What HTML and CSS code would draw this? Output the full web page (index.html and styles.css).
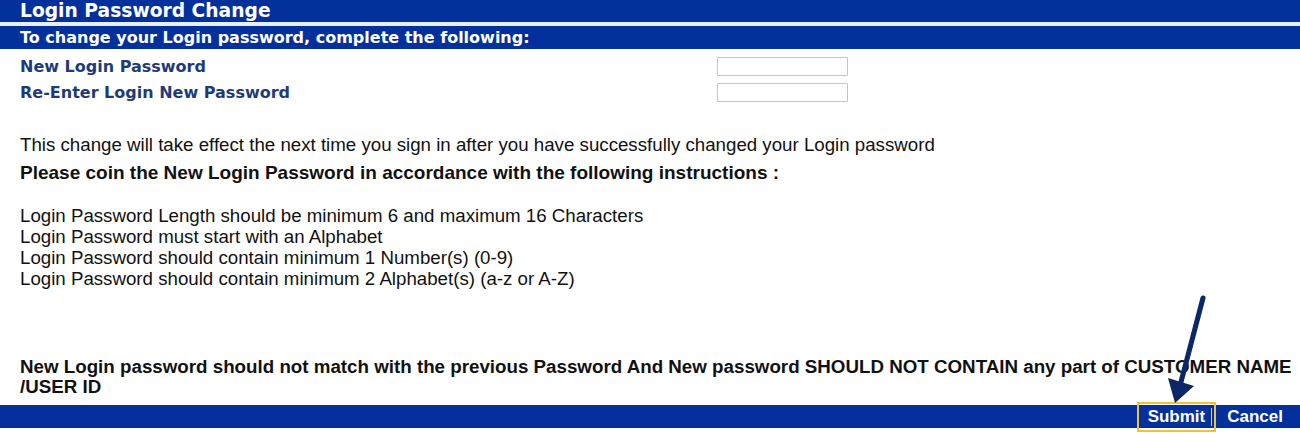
FILE: index.html
```html
<!DOCTYPE html>
<html>
  <head>
    <meta charset="utf-8">
    <title>Login Password Change</title>
    <link rel="stylesheet" href="styles.css">
  </head>
  <body>
    <div class="page">
      <div class="bar title">Login Password Change</div>
      <div class="bar subtitle">To change your Login password, complete the following:</div>

      <div class="fields">
        <label class="label" for="new_pwd">New Login Password</label>
        <input class="pwd" id="new_pwd" type="password">
        <label class="label" for="re_pwd">Re-Enter Login New Password</label>
        <input class="pwd" id="re_pwd" type="password">
      </div>

      <div class="info">
        <p class="note">This change will take effect the next time you sign in after you have successfully changed your Login password</p>
        <p class="rules-head">Please coin the New Login Password in accordance with the following instructions :</p>
        <ul class="rules">
          <li>Login Password Length should be minimum 6 and maximum 16 Characters</li>
          <li>Login Password must start with an Alphabet</li>
          <li>Login Password should contain minimum 1 Number(s) (0-9)</li>
          <li>Login Password should contain minimum 2 Alphabet(s) (a-z or A-Z)</li>
        </ul>
        <p class="warning">New Login password should not match with the previous Password And New password SHOULD NOT CONTAIN any part of CUSTOMER NAME /USER ID</p>
      </div>

      <div class="bar actions">
        <a class="btn submit" href="#">Submit</a>
        <a class="btn" href="#">Cancel</a>
      </div>

      <!-- annotation arrow pointing at submit -->
      <svg class="arrow" width="60" height="120" viewBox="0 0 60 120">
        <line x1="53" y1="8" x2="31" y2="92" stroke="#0b2766" stroke-width="5" stroke-linecap="round"/>
        <polygon points="18,88 44,96 25,113" fill="#0b2766"/>
      </svg>
    </div>
  </body>
</html>
```

FILE: styles.css
```css
body {
  margin: 0;
  background: #fff;
  font-family: "Liberation Sans", Arial, sans-serif;
}
.page {
  position: relative;
  width: 1300px;
  height: 434px;
}
.bar {
  background: #03309b;
  color: #fff;
  font-family: "DejaVu Sans", Verdana, sans-serif;
  font-weight: bold;
}
.title {
  height: 22px;
  line-height: 22px;
  font-size: 18.7px;
  padding-left: 20px;
  border-bottom: 4px solid #e6f0fb;
}
.subtitle {
  height: 23px;
  line-height: 24px;
  font-size: 16px;
  padding-left: 20px;
}
.fields {
  display: grid;
  grid-template-columns: 697px 131px;
  row-gap: 7px;
  padding: 8px 0 0 20px;
  align-items: center;
}
.label {
  font-family: "DejaVu Sans", Verdana, sans-serif;
  font-weight: bold;
  font-size: 16px;
  color: #1e3b78;
}
.pwd {
  box-sizing: border-box;
  width: 131px;
  height: 19px;
  margin: 0;
  border: 1px solid #c4c4c4;
  border-radius: 1px;
  background: #fff;
}
.info {
  padding: 32px 5px 0 20px;
  font-size: 18.7px;
  color: #111;
}
.info p {
  margin: 0;
}
.note {
  line-height: 21px;
}
.rules-head {
  font-weight: bold;
  font-size: 19px;
  line-height: 21px;
  margin-top: 7px !important;
}
.rules {
  list-style: none;
  margin: 22px 0 0;
  padding: 0;
  line-height: 21px;
}
.warning {
  font-weight: bold;
  font-size: 18.75px;
  line-height: 20px;
  margin-top: 68px !important;
}
.actions {
  display: flex;
  justify-content: flex-end;
  align-items: center;
  gap: 11px;
  height: 23px;
  margin-top: 8px;
  padding-right: 17px;
  font-family: "Liberation Sans", Arial, sans-serif;
  font-size: 17px;
}
.btn {
  color: #fff;
  text-decoration: none;
}
.submit {
  box-sizing: border-box;
  height: 30px;
  padding: 0 2px 0 9px;
  border: 2px solid #eec23a;
  display: flex;
  align-items: center;
  gap: 6px;
}
.submit::after {
  content: "";
  width: 1px;
  height: 18px;
  background: #c9d3ea;
}
.arrow {
  position: absolute;
  left: 1150px;
  top: 290px;
}
```
